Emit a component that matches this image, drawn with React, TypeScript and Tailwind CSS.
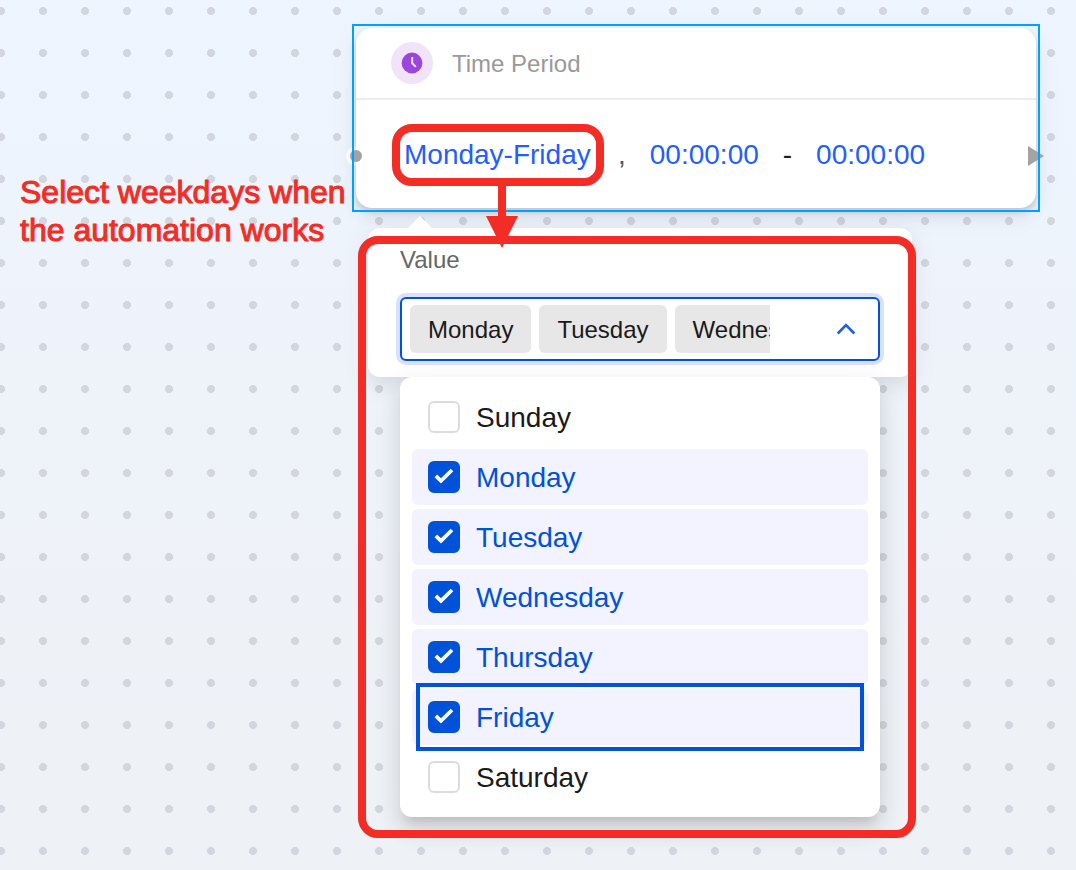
import React, { useState } from 'react';

const DAYS = ['Sunday', 'Monday', 'Tuesday', 'Wednesday', 'Thursday', 'Friday', 'Saturday'];

const TimePeriodNode: React.FC = () => (
  <section className="relative p-1">
    <div className="rounded-2xl bg-white shadow-[0_6px_28px_4px_rgba(0,0,0,0.04),0_8px_16px_0_rgba(0,0,0,0.06),0_4px_6px_0_rgba(0,0,0,0.12)]">
      <header className="flex h-[72px] items-center gap-[19px] border-b-2 border-[#ececec] pl-[35px]">
        <span className="flex size-[42px] items-center justify-center rounded-full bg-[#f0e3fa]">
          <svg viewBox="0 0 22 22" className="size-[22px]" aria-hidden="true">
            <circle cx="11" cy="11" r="10.4" fill="#9b45de" />
            <path d="M11.2 5v6.3l3.7 3.6" fill="none" stroke="#f0e3fa" strokeWidth="2" />
          </svg>
        </span>
        <h2 className="pt-0.5 text-2xl text-[#999]">Time Period</h2>
      </header>
      <div className="flex h-[108px] items-center gap-6 pt-0.5 pl-12 text-[28px] leading-8 text-[#1f1f1f]">
        <button type="button" className="relative w-[190px] text-left whitespace-nowrap text-[#1f5eff]">
          Monday-Friday
          <span className="pointer-events-none absolute -inset-y-[15px] -right-2.5 -left-3 rounded-[20px] border-8 border-[#f32c25]" />
        </button>
        <span className="text-[#555]">,</span>
        <button type="button" className="text-[#1f5eff]">00:00:00</button>
        <span>-</span>
        <button type="button" className="text-[#1f5eff]">00:00:00</button>
      </div>
    </div>

    {/* connection handles */}
    <span className="absolute top-[122px] -left-1.5 -z-10 size-5 rounded-full bg-white" />
    <span className="absolute top-[126px] -left-0.5 size-3 rounded-full bg-[#a3a3a3]" />
    <svg viewBox="0 0 16 20" className="absolute top-[122px] -right-1 h-5 w-4" aria-hidden="true">
      <path d="M0 0l16 10L0 20z" fill="#a3a3a3" />
    </svg>

    {/* selection outline */}
    <span className="pointer-events-none absolute inset-0 border-2 border-[#00a1ff]" />

    {/* arrow down to the value popover */}
    <svg viewBox="0 0 32 64" className="absolute top-40 left-[134px] z-20 h-16 w-8" aria-hidden="true">
      <path d="M12 0h8v32h12L16 64 0 32h12z" fill="#f32c25" />
    </svg>
  </section>
);

interface DayOptionProps {
  day: string;
  checked: boolean;
  highlighted: boolean;
  onToggle: () => void;
}

const DayOption: React.FC<DayOptionProps> = ({ day, checked, highlighted, onToggle }) => (
  <li className="relative">
    <label
      className={`flex h-14 cursor-pointer items-center gap-4 rounded-md px-4 text-[28px] leading-8 ${checked ? 'bg-[#f2f3ff] text-[#0052d9]' : 'text-[#1a1a1a]'}`}
    >
      <span className="relative size-8 shrink-0">
        <input
          type="checkbox"
          checked={checked}
          onChange={onToggle}
          className="block size-8 appearance-none rounded-md border-2 border-[#dcdcdc] bg-white checked:border-[#0052d9] checked:bg-[#0052d9]"
        />
        {checked && (
          <svg viewBox="0 0 32 32" className="pointer-events-none absolute inset-0 size-8" aria-hidden="true">
            <path d="M7.8 14.8l5.2 5L24 9" fill="none" stroke="#fff" strokeWidth="3.8" />
          </svg>
        )}
      </span>
      <span className="pt-0.5">{day}</span>
    </label>
    {highlighted && (
      <span className="pointer-events-none absolute inset-x-1 -inset-y-1.5 z-10 border-4 border-[#0052d9]" />
    )}
  </li>
);

const WeekdayPopover: React.FC = () => {
  const [selected, setSelected] = useState<string[]>(DAYS.slice(1, 6));
  const [isOpen, setIsOpen] = useState(true);

  const toggleDay = (day: string) => {
    setSelected(DAYS.filter(d => (d === day ? !selected.includes(d) : selected.includes(d))));
  };

  return (
    <div className="relative mt-4 ml-4 w-[544px]">
      <div className="rounded-xl bg-white px-8 pt-4 pb-4 shadow-[0_6px_28px_4px_rgba(0,0,0,0.05),0_8px_16px_0_rgba(0,0,0,0.05)]">
        <svg viewBox="0 0 24 12" className="absolute -top-3 left-10 h-3 w-6" aria-hidden="true">
          <path d="M0 12L12 0l12 12z" fill="#fff" />
        </svg>
        <p id="weekday-label" className="text-2xl text-[#666]">Value</p>
        <button
          type="button"
          aria-labelledby="weekday-label"
          aria-expanded={isOpen}
          onClick={() => setIsOpen(!isOpen)}
          className="mt-[21px] flex h-16 w-full items-center justify-between rounded-md border-2 border-[#0052d9] bg-white pr-5 pl-2 ring-4 ring-[#d9e1ff]"
        >
          <span className="flex w-[360px] gap-2 overflow-hidden">
            {selected.map(day => (
              <span key={day} className="flex h-12 shrink-0 items-center rounded-md bg-[#e7e7e7] px-[18px] pt-0.5 text-2xl text-[#1a1a1a]">
                {day}
              </span>
            ))}
          </span>
          <svg viewBox="0 0 24 24" className="size-6" aria-hidden="true">
            <path d="M3.7 16.5L12 8l8.3 8.5" fill="none" stroke="#1f5fe0" strokeWidth="2.6" />
          </svg>
        </button>
      </div>

      {isOpen && (
        <ul className="relative mx-8 flex flex-col gap-1 rounded-xl bg-white p-3 shadow-[0_6px_28px_4px_rgba(0,0,0,0.06),0_16px_20px_2px_rgba(0,0,0,0.07),0_10px_10px_-6px_rgba(0,0,0,0.12)]">
          {DAYS.map(day => (
            <DayOption
              key={day}
              day={day}
              checked={selected.includes(day)}
              highlighted={day === 'Friday'}
              onToggle={() => toggleDay(day)}
            />
          ))}
        </ul>
      )}

      <span className="pointer-events-none absolute top-2 -right-1 -bottom-[21px] -left-2.5 rounded-[20px] border-8 border-[#f32c25]" />
    </div>
  );
};

export default function App() {
  return (
    <main className="relative isolate min-h-screen overflow-hidden bg-linear-to-b from-[#eef5ff] to-[#eef1f5] font-['Liberation_Sans',Arial,sans-serif]">
      {/* dotted canvas grid */}
      <div className="absolute inset-0 -z-20 bg-[radial-gradient(circle,#d3d5df_4px,transparent_4px)] bg-[length:42px_42px] bg-[position:-20px_-10px]" />

      <p className="absolute top-[173px] left-5 text-[32px] leading-[38px] whitespace-nowrap text-[#f32c25] [-webkit-text-stroke:1px_#f32c25]">
        Select weekdays when
        <br />
        the automation works
      </p>

      <div className="absolute top-6 left-[352px] w-[688px]">
        <TimePeriodNode />
        <WeekdayPopover />
      </div>
    </main>
  );
}
